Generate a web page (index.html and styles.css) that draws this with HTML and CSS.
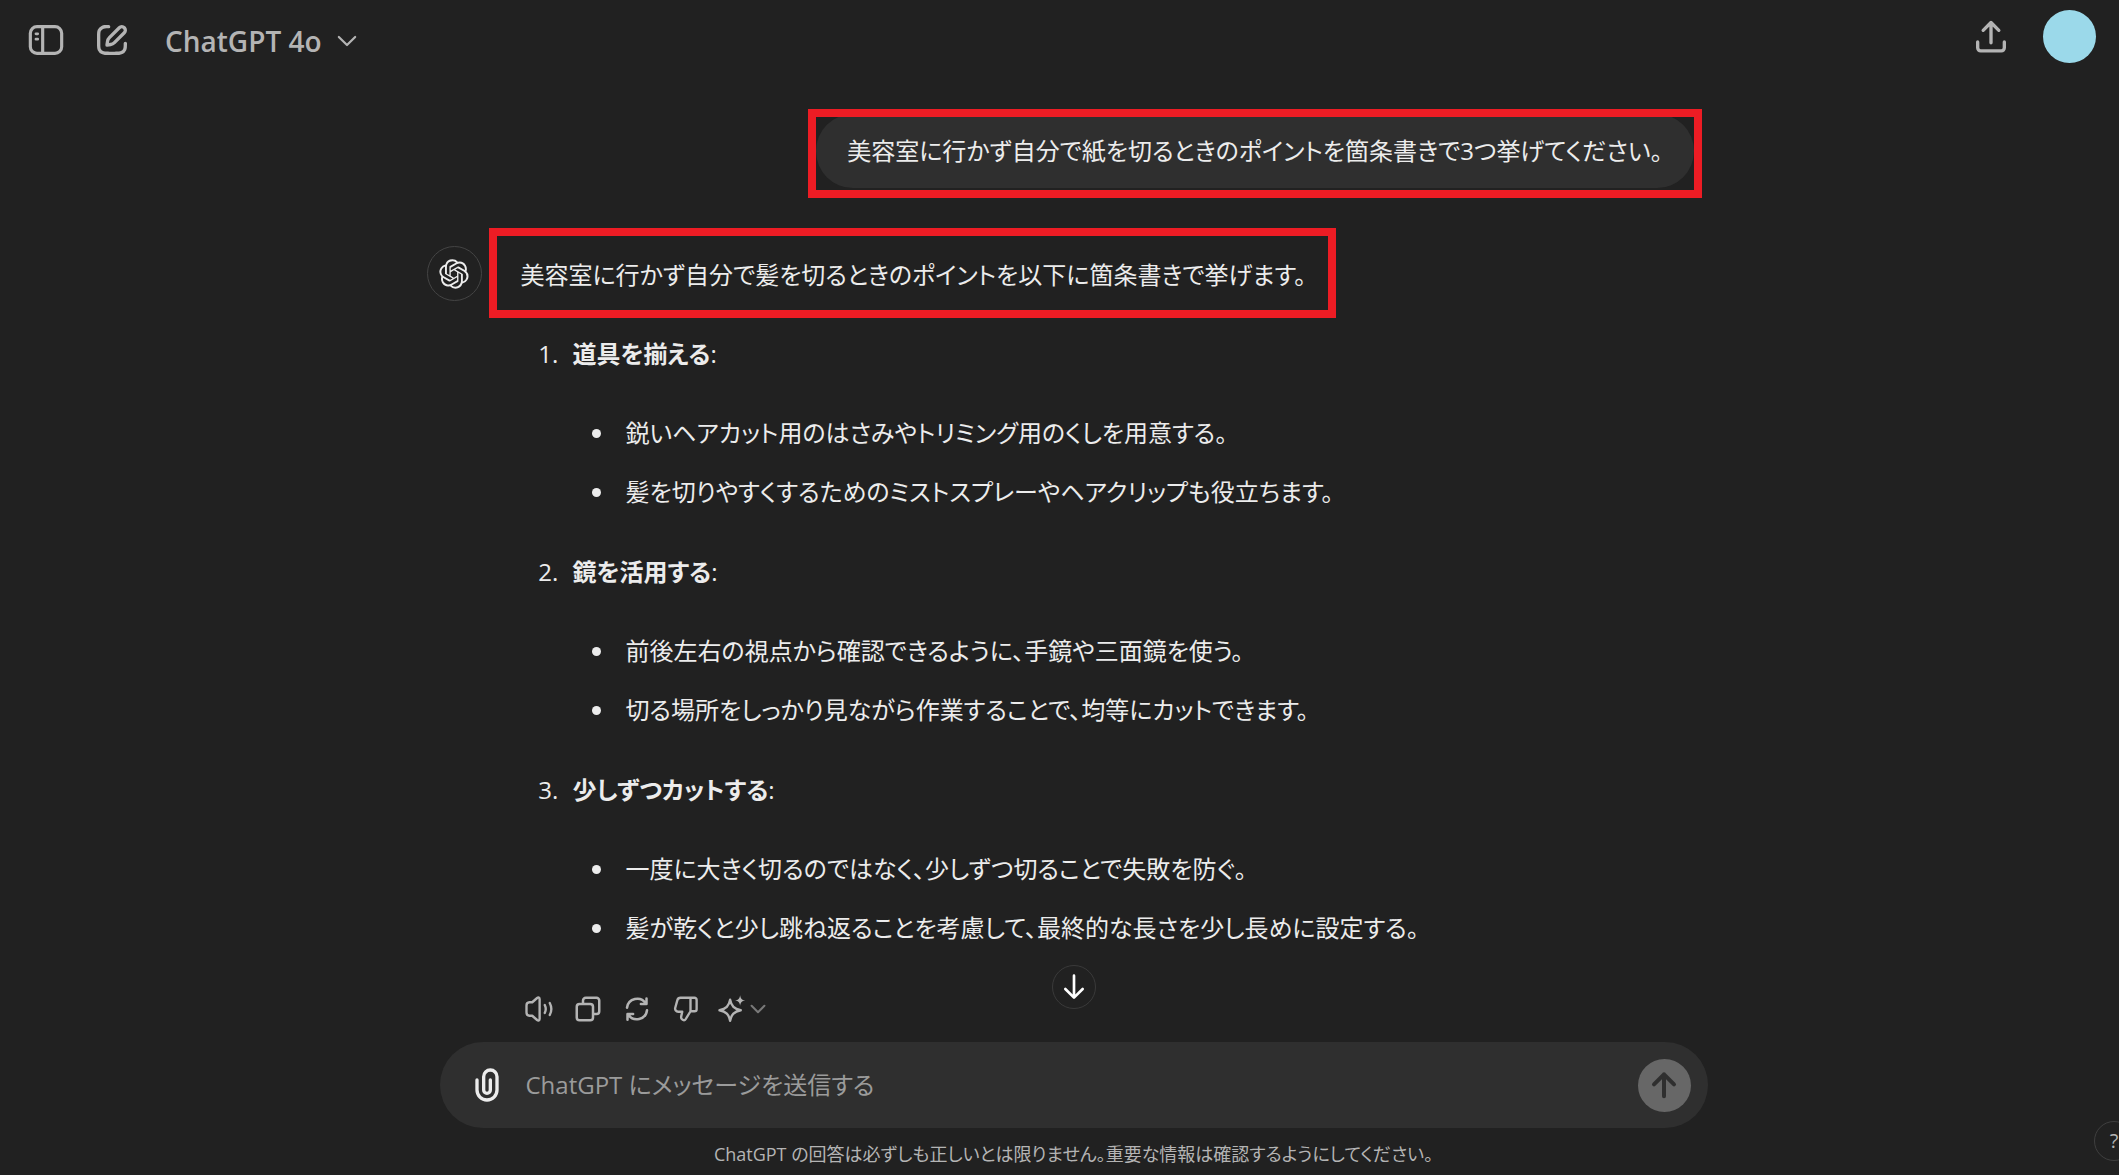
FILE: index.html
```html
<!DOCTYPE html>
<html lang="ja">
<head>
<meta charset="utf-8">
<meta name="viewport" content="width=device-width, initial-scale=1">
<title>ChatGPT</title>
<link rel="stylesheet" href="styles.css">
</head>
<body>
<header class="topbar">
  <div class="topbar-group">
    <button class="icon-button" type="button" aria-label="サイドバーを開く">
      <svg width="40" height="40" viewBox="0 0 24 24" fill="none" stroke="currentColor" stroke-width="1.9" stroke-linecap="round"><rect x="2.6" y="4" width="18.8" height="16" rx="4"/><path d="M10 4v16"/><path d="M6 8.3h1M6 11.5h1" stroke-width="1.7"/></svg>
    </button>
    <button class="icon-button" type="button" aria-label="新しいチャット">
      <svg width="40" height="40" viewBox="0 0 24 24" fill="currentColor"><path d="M15.673 3.913a3.121 3.121 0 1 1 4.414 4.414l-5.937 5.937a5 5 0 0 1-2.828 1.415l-2.18.31a1 1 0 0 1-1.132-1.13l.311-2.18A5 5 0 0 1 9.736 9.85zm3 1.414a1.12 1.12 0 0 0-1.586 0l-5.937 5.937a3 3 0 0 0-.849 1.697l-.123.86.86-.122a3 3 0 0 0 1.698-.849l5.937-5.937a1.12 1.12 0 0 0 0-1.586M11 4A1 1 0 0 1 10 5c-.998 0-1.702.008-2.253.06-.54.052-.862.141-1.109.267a3 3 0 0 0-1.311 1.311c-.134.263-.226.611-.276 1.216C5.001 8.471 5 9.264 5 10.4v3.2c0 1.137 0 1.929.051 2.546.05.605.142.953.276 1.216a3 3 0 0 0 1.311 1.311c.263.134.611.226 1.216.276.617.05 1.41.051 2.546.051h3.2c1.137 0 1.929 0 2.546-.051.605-.05.953-.142 1.216-.276a3 3 0 0 0 1.311-1.311c.126-.247.215-.569.266-1.108.053-.552.06-1.256.06-2.255a1 1 0 1 1 2 .002c0 .978-.006 1.78-.069 2.442-.064.673-.192 1.27-.475 1.827a5 5 0 0 1-2.185 2.185c-.592.302-1.232.428-1.961.487C15.6 21 14.727 21 13.643 21h-3.286c-1.084 0-1.958 0-2.666-.058-.728-.06-1.369-.185-1.96-.487a5 5 0 0 1-2.186-2.185c-.302-.592-.428-1.233-.487-1.961C3 15.6 3 14.727 3 13.643v-3.286c0-1.084 0-1.958.058-2.666.06-.729.185-1.369.487-1.961A5 5 0 0 1 5.73 3.545c.556-.284 1.154-.411 1.827-.475C8.22 3.007 9.021 3 10 3A1 1 0 0 1 11 4"/></svg>
    </button>
    <button class="model-button" type="button">ChatGPT 4o
      <svg width="28" height="28" viewBox="0 0 24 24" fill="none" stroke="currentColor" stroke-width="1.9" stroke-linecap="round" stroke-linejoin="round"><path d="M5 8.5l7 7 7-7"/></svg>
    </button>
  </div>
  <div class="topbar-group topbar-right">
    <button class="icon-button" type="button" aria-label="共有する">
      <svg width="40" height="40" viewBox="0 0 24 24" fill="none" stroke="currentColor" stroke-width="2" stroke-linecap="round" stroke-linejoin="round"><path d="M12 15.500V3.500M7.300 8L12 3.300 16.700 8M4 15v3.500A1.800 1.800 0 0 0 5.800 20.300h12.400A1.800 1.800 0 0 0 20 18.500V15"/></svg>
    </button>
    <button class="profile" type="button" aria-label="アカウント"></button>
  </div>
</header>

<main class="thread">
  <div class="user-row">
    <div class="highlight highlight-user">
      <p class="bubble">美容室に行かず自分で紙を切るときのポイントを箇条書きで3つ挙げてください。</p>
    </div>
  </div>

  <article class="reply">
    <div class="bot-avatar">
      <svg width="30" height="30" viewBox="0 0 41 41" fill="currentColor"><path d="M37.532 16.87a9.963 9.963 0 0 0-.856-8.184 10.078 10.078 0 0 0-10.855-4.835A9.964 9.964 0 0 0 18.306.5a10.079 10.079 0 0 0-9.614 6.977 9.967 9.967 0 0 0-6.664 4.834 10.08 10.08 0 0 0 1.24 11.817 9.965 9.965 0 0 0 .856 8.185 10.079 10.079 0 0 0 10.855 4.835 9.965 9.965 0 0 0 7.516 3.35 10.078 10.078 0 0 0 9.617-6.981 9.967 9.967 0 0 0 6.663-4.834 10.079 10.079 0 0 0-1.243-11.813ZM22.498 37.886a7.474 7.474 0 0 1-4.799-1.735c.061-.033.168-.091.237-.134l7.964-4.6a1.294 1.294 0 0 0 .655-1.134V19.054l3.366 1.944a.12.12 0 0 1 .066.092v9.299a7.505 7.505 0 0 1-7.49 7.496ZM6.392 31.006a7.471 7.471 0 0 1-.894-5.023c.06.036.162.099.237.141l7.964 4.6a1.297 1.297 0 0 0 1.308 0l9.724-5.614v3.888a.12.12 0 0 1-.048.103l-8.051 4.649a7.504 7.504 0 0 1-10.24-2.744ZM4.297 13.62A7.469 7.469 0 0 1 8.2 10.333c0 .068-.004.19-.004.274v9.201a1.294 1.294 0 0 0 .654 1.132l9.723 5.614-3.366 1.944a.12.12 0 0 1-.114.01L7.04 23.856a7.504 7.504 0 0 1-2.743-10.237Zm27.658 6.437-9.724-5.615 3.367-1.943a.121.121 0 0 1 .113-.01l8.052 4.648a7.498 7.498 0 0 1-1.158 13.528v-9.476a1.293 1.293 0 0 0-.65-1.132Zm3.35-5.043c-.059-.037-.162-.099-.236-.141l-7.965-4.6a1.298 1.298 0 0 0-1.308 0l-9.723 5.614v-3.888a.12.12 0 0 1 .048-.103l8.05-4.645a7.497 7.497 0 0 1 11.135 7.763Zm-21.063 6.929-3.367-1.944a.12.12 0 0 1-.065-.092v-9.299a7.497 7.497 0 0 1 12.293-5.756 6.94 6.94 0 0 0-.236.134l-7.965 4.6a1.294 1.294 0 0 0-.654 1.132l-.006 11.225Zm1.829-3.943 4.33-2.501 4.332 2.5v5l-4.331 2.5-4.331-2.5V18Z"/></svg>
    </div>
    <div class="reply-body">
      <div class="highlight highlight-reply">
        <p class="lead">美容室に行かず自分で髪を切るときのポイントを以下に箇条書きで挙げます。</p>
      </div>
      <ol class="points">
        <li><strong>道具を揃える</strong>:
          <ul>
            <li>鋭いヘアカット用のはさみやトリミング用のくしを用意する。</li>
            <li>髪を切りやすくするためのミストスプレーやヘアクリップも役立ちます。</li>
          </ul>
        </li>
        <li><strong>鏡を活用する</strong>:
          <ul>
            <li>前後左右の視点から確認できるように、手鏡や三面鏡を使う。</li>
            <li>切る場所をしっかり見ながら作業することで、均等にカットできます。</li>
          </ul>
        </li>
        <li><strong>少しずつカットする</strong>:
          <ul>
            <li>一度に大きく切るのではなく、少しずつ切ることで失敗を防ぐ。</li>
            <li>髪が乾くと少し跳ね返ることを考慮して、最終的な長さを少し長めに設定する。</li>
          </ul>
        </li>
      </ol>
      <div class="actions">
        <button type="button" aria-label="読み上げる"><svg width="30" height="30" viewBox="0 0 24 24" fill="none" stroke="currentColor" stroke-width="1.9" stroke-linecap="round" stroke-linejoin="round"><path d="M12.500 4.200v15.600c0 1.400-1 1.800-2 1L6.600 17.400H4.400A2.600 2.600 0 0 1 2 14.800V9.200a2.600 2.600 0 0 1 2.400-2.600h2.200L10.500 3.200c1-.8 2-.4 2 1zM16.600 8.800c1 2 1 4.400 0 6.400M20.600 7.200c1.600 3 1.600 6.600 0 9.600"/></svg></button>
        <button type="button" aria-label="コピー"><svg width="30" height="30" viewBox="0 0 24 24" fill="none" stroke="currentColor" stroke-width="2" stroke-linejoin="round"><rect x="3" y="8" width="13" height="13" rx="2.200"/><path d="M8 8V5.200A2.200 2.200 0 0 1 10.200 3h8.600A2.200 2.200 0 0 1 21 5.200v8.600a2.200 2.200 0 0 1-2.200 2.200H16"/></svg></button>
        <button type="button" aria-label="再生成する"><svg width="30" height="30" viewBox="0 0 24 24" fill="none" stroke="currentColor" stroke-width="2" stroke-linecap="round" stroke-linejoin="round"><path d="M4 11a8.200 8.200 0 0 1 15-3.500M20 13a8.200 8.200 0 0 1-15 3.500M19.600 3.500v4.500h-4.500M4.400 20.500v-4.500h4.500"/></svg></button>
        <button type="button" aria-label="よくない回答"><svg width="30" height="30" viewBox="0 0 24 24" fill="none" stroke="currentColor" stroke-width="1.900" stroke-linecap="round" stroke-linejoin="round"><path d="M16 3H7.600a2.600 2.600 0 0 0-2.500 1.900L3.400 11a2.500 2.500 0 0 0 2.400 3.200H9l-.8 3.500c-.4 1.700.5 3.300 2.200 3.300.6 0 1-.3 1.300-.8L15.600 13.800H18.800A1.700 1.700 0 0 0 20.500 12.100V4.700A1.700 1.700 0 0 0 18.800 3zM15.600 3v10.800"/></svg></button>
        <button class="switch-model" type="button" aria-label="モデルを変更する"><svg width="30" height="30" viewBox="0 0 24 24" fill="none" stroke="currentColor" stroke-width="1.900" stroke-linejoin="round"><path d="M10.500 4.500c1 5.300 3.200 7.500 8.500 8.500-5.300 1-7.500 3.200-8.500 8.500C9.500 16.200 7.300 14 2 13c5.300-1 7.500-3.200 8.500-8.500z"/><path d="M18.500 1c.5 2.900 1.300 3.700 4 4.200-2.700.5-3.500 1.300-4 4.200-.5-2.900-1.300-3.700-4-4.200 2.700-.5 3.500-1.300 4-4.200z" fill="currentColor" stroke="none"/></svg><svg class="dim" width="22" height="22" viewBox="0 0 24 24" fill="none" stroke="currentColor" stroke-width="2.200" stroke-linecap="round" stroke-linejoin="round"><path d="M5 8.500l7 7 7-7"/></svg></button>
      </div>
    </div>
  </article>
</main>

<footer class="dock">
  <button class="scroll-down" type="button" aria-label="一番下へ">
    <svg width="32" height="32" viewBox="0 0 24 24" fill="none" stroke="currentColor" stroke-width="2" stroke-linecap="round" stroke-linejoin="round"><path d="M12 3.500v16M5.500 13.500L12 20l6.500-6.500"/></svg>
  </button>
  <form class="composer">
    <button class="attach" type="button" aria-label="ファイルを添付">
      <svg width="40" height="40" viewBox="0 0 24 24" fill="currentColor"><path fill-rule="evenodd" clip-rule="evenodd" d="M9 7a5 5 0 0 1 10 0v8a7 7 0 1 1-14 0V9a1 1 0 0 1 2 0v6a5 5 0 0 0 10 0V7a3 3 0 1 0-6 0v8a1 1 0 1 0 2 0V9a1 1 0 1 1 2 0v6a3 3 0 1 1-6 0z"/></svg>
    </button>
    <input class="prompt" type="text" aria-label="メッセージ" placeholder="ChatGPT にメッセージを送信する">
    <button class="send" type="button" aria-label="送信">
      <svg width="32" height="32" viewBox="0 0 24 24" fill="none" stroke="currentColor" stroke-width="3" stroke-linecap="round" stroke-linejoin="round"><path d="M12 20.500V4M4.500 11.500L12 4l7.500 7.500"/></svg>
    </button>
  </form>
  <p class="notice">ChatGPT の回答は必ずしも正しいとは限りません。重要な情報は確認するようにしてください。</p>
  <button class="help" type="button" aria-label="ヘルプ">?</button>
</footer>
</body>
</html>
```

FILE: styles.css
```css
* {
  box-sizing: border-box;
}

body {
  margin: 0;
  min-height: 100vh;
  display: flex;
  flex-direction: column;
  overflow: hidden;
  background: #212121;
  color: #ececec;
  font-family: "Open Sans", "Noto Sans CJK JP", sans-serif;
  font-size: 24px;
  line-height: 46px;
  font-feature-settings: "palt";
}

p,
ol,
ul {
  margin: 0;
  padding: 0;
}

button {
  display: flex;
  align-items: center;
  justify-content: center;
  padding: 0;
  border: 0;
  background: none;
  color: #b4b4b4;
  font: inherit;
}

svg {
  display: block;
  flex: none;
}

/* Top bar */
.topbar {
  display: flex;
  justify-content: space-between;
  height: 80px;
  padding: 0 23px 0 26px;
}

.topbar-group {
  display: flex;
  align-items: center;
  gap: 26px;
}

.topbar-right {
  height: 73px;
  gap: 32px;
}

.model-button {
  gap: 11px;
  padding: 2px 0 0 7px;
  font-size: 28px;
  font-weight: 600;
}

.profile {
  width: 53px;
  height: 53px;
  border-radius: 50%;
  background: #9bd9ea;
}

/* Conversation */
.thread {
  flex: 1;
  width: 100%;
  padding: 29px 0 0 28px;
}

.user-row,
.reply {
  max-width: 1294px;
  margin: 0 auto;
}

.user-row {
  display: flex;
  justify-content: flex-end;
  padding-right: 19px;
}

.highlight {
  width: fit-content;
  border: 8px solid #ed1c24;
}

.highlight-user {
  overflow: hidden;
  padding-bottom: 2px;
}

.bubble {
  margin-top: -3px;
  padding: 14px 31px;
  border-radius: 37px;
  background: #2f2f2f;
}

.reply {
  display: flex;
  gap: 7px;
  padding-top: 30px;
}

.bot-avatar {
  display: flex;
  align-items: center;
  justify-content: center;
  flex: none;
  width: 55px;
  height: 55px;
  margin-top: 18px;
  border: 1px solid #444;
  border-radius: 50%;
}

.lead {
  padding: 16px 22px 12px 24px;
}

.points {
  display: flex;
  flex-direction: column;
  gap: 34px;
  padding: 13px 0 0 76px;
}

.points > li {
  padding-left: 8px;
}

.points ul {
  display: flex;
  flex-direction: column;
  gap: 13px;
  padding: 33px 0 0 43px;
  list-style: disc;
}

.points ul > li {
  padding-left: 10px;
}

.actions {
  display: flex;
  align-items: center;
  gap: 19px;
  height: 48px;
  margin: 34px 0 8px 35px;
}

.dim {
  opacity: 0.6;
}

.switch-model {
  margin-left: -3px;
}

/* Message box */
.dock {
  position: relative;
  padding-left: 28px;
}

.scroll-down {
  position: absolute;
  left: calc(50% + 14px);
  bottom: calc(100% + 33px);
  width: 44px;
  height: 44px;
  margin-left: -22px;
  border: 1px solid #3a3a3a;
  border-radius: 50%;
  background: #212121;
  color: #fff;
}

.composer {
  display: flex;
  align-items: center;
  max-width: 1268px;
  height: 86px;
  margin: 0 auto;
  padding: 0 17px 0 27px;
  border-radius: 43px;
  background: #2f2f2f;
}

.attach {
  color: #ececec;
}

.prompt {
  flex: 1;
  min-width: 0;
  padding: 0 19px;
  border: 0;
  outline: 0;
  background: none;
  color: #ececec;
  font: inherit;
  font-feature-settings: inherit;
}

.prompt::placeholder {
  color: #9b9b9b;
  opacity: 1;
}

.send {
  width: 53px;
  height: 53px;
  border-radius: 50%;
  background: #676767;
  color: #2f2f2f;
}

.notice {
  height: 47px;
  padding-top: 10px;
  color: #b4b4b4;
  font-size: 18px;
  line-height: 32px;
  text-align: center;
}

.help {
  position: absolute;
  right: -15px;
  bottom: 14px;
  width: 40px;
  height: 40px;
  border: 1px solid #3f3f3f;
  border-radius: 50%;
  font-size: 20px;
}
```
